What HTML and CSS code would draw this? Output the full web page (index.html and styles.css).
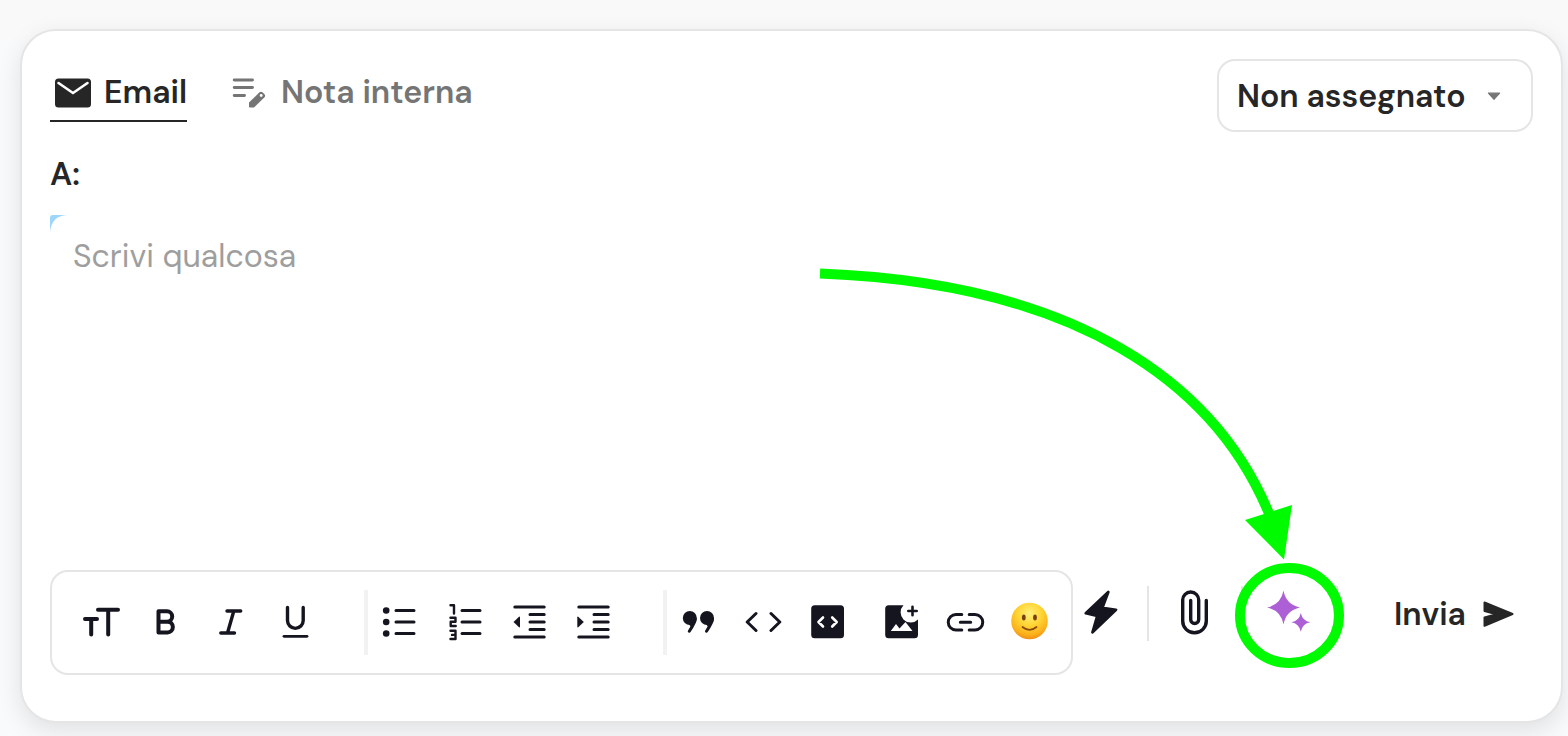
FILE: index.html
```html
<!DOCTYPE html>
<html lang="it">
<head>
<meta charset="utf-8">
<meta name="viewport" content="width=device-width, initial-scale=1">
<title>Email</title>
<link rel="stylesheet" href="styles.css">
</head>
<body class="page">
<main class="composer">
  <header class="composer-head">
    <nav class="tabs">
      <button class="tab tab-active" type="button">
        <svg class="tab-icon" viewBox="0 -1 38 32" aria-hidden="true"><rect x="1" y="1.5" width="36" height="29" rx="3.5" fill="currentColor"/><path d="M4.500 6 19 16 33.500 6" fill="none" stroke="#fff" stroke-width="2.600" stroke-linecap="round"/></svg>
        Email
      </button>
      <button class="tab" type="button">
        <svg class="tab-icon" viewBox="0 -1 38 32" aria-hidden="true"><path d="M3.200 3H21.500M3.200 10.500H21.500M3.200 18.500H13.500" fill="none" stroke="currentColor" stroke-width="2.900" stroke-linecap="round"/><path d="M18 25.500 28.500 15.300q1.500-1.200 3 0l2 2q1.300 1.500 0 3L23 30.500h-4q-1 0-1-1z" fill="currentColor"/><circle cx="30.200" cy="18.500" r="1.400" fill="#fff"/></svg>
        Nota interna
      </button>
    </nav>
    <div class="assignee">
      <select class="assignee-select" aria-label="Assegnatario"><option>Non assegnato</option></select>
      <svg class="assignee-caret" viewBox="0 0 12 8" aria-hidden="true"><path d="M1 1h10L6 6.500z" fill="#757575" stroke="#757575" stroke-linejoin="round"/></svg>
    </div>
  </header>

  <div class="recipient">
    <label class="recipient-label" for="to">A:</label>
    <input class="recipient-input" id="to" type="text">
  </div>

  <div class="editor">
    <svg class="editor-corner" viewBox="0 0 18 18" aria-hidden="true"><path d="M0 17V3Q0 0 3 0H17Q1.500 1 0 17z" fill="#9dd5fb"/></svg>
    <textarea class="editor-text" aria-label="Messaggio" placeholder="Scrivi qualcosa"></textarea>
  </div>

  <footer class="composer-foot">
    <div class="toolbar">
      <div class="group">
        <button class="tool" type="button" aria-label="Dimensione testo"><svg class="icon line" viewBox="0 0 48 48"><path stroke-width="4" d="M21 11.700H41M31.200 12V36.500M8 21H20M14.200 21V36.500"/></svg></button>
        <button class="tool" type="button" aria-label="Grassetto"><svg class="icon line" viewBox="0 0 48 48"><path stroke-width="4" d="M16.500 13.300H25a5 5 0 0 1 0 10.400H16.500zM16.500 23.700H25.500a5.300 5.300 0 0 1 0 10.700H16.500z"/></svg></button>
        <button class="tool" type="button" aria-label="Corsivo"><svg class="icon line" viewBox="0 0 48 48"><path stroke-width="3.400" d="M20 13H33.700M13.800 35H27.500M26.800 13 20.500 35"/></svg></button>
        <button class="tool" type="button" aria-label="Sottolineato"><svg class="icon line" viewBox="0 0 48 48"><path d="M15.500 9.500V22.500a7.800 7.800 0 0 0 15.700 0V9.500" stroke-width="3.400"/><path d="M12 38.300H35" stroke-width="2.800"/></svg></button>
      </div>
      <div class="group group-divided">
        <button class="tool" type="button" aria-label="Elenco puntato"><svg class="icon line" viewBox="0 0 48 48"><path d="M20 12.500H38M20 24H38M20 35.500H38"/><g fill="currentColor" stroke="none"><circle cx="10.200" cy="12.500" r="3.300"/><circle cx="10.200" cy="24" r="3.300"/><circle cx="10.200" cy="35.500" r="3.300"/></g></svg></button>
        <button class="tool" type="button" aria-label="Elenco numerato"><svg class="icon line" viewBox="0 0 48 48"><path d="M21 12.500H39M21 24H39M21 35.500H39"/><path stroke-width="2.400" d="M9.500 7.200H13V15.500M9.500 19.700H14.500V23.800H9.700V28H14.700M9.500 32.800H14.500V41H9.500M11 36.900H14.500"/></svg></button>
        <button class="tool" type="button" aria-label="Riduci rientro"><svg class="icon line" viewBox="0 0 48 48"><path d="M8.800 9H38.200M8.800 39H38.200M24 16.500H38.200M24 24H38.200M24 31.500H38.200"/><path fill="currentColor" stroke="none" d="M7.500 24 13.300 18.500q.7 0 .7.800v9.400q0 .8-.7.800z"/></svg></button>
        <button class="tool" type="button" aria-label="Aumenta rientro"><svg class="icon line" viewBox="0 0 48 48"><path d="M7.800 9H37.200M7.800 39H37.200M23 16.500H37.200M23 24H37.200M23 31.500H37.200"/><path fill="currentColor" stroke="none" d="M12.800 24 7 18.500q-.7 0-.7.800v9.400q0 .8.700.8z"/></svg></button>
      </div>
      <div class="group group-divided">
        <button class="tool" type="button" aria-label="Citazione"><svg class="icon line" viewBox="0 0 48 48"><circle cx="14.800" cy="20" r="7" fill="currentColor" stroke="none"/><circle cx="32" cy="20" r="7" fill="currentColor" stroke="none"/><path stroke-width="3" d="M20.300 21Q20 24.500 14.300 33.200M37.500 21Q37.200 24.500 31.500 33.200"/><path fill="currentColor" stroke="none" d="M14 26.500 21.500 20 17 30zM31.200 26.500 38.700 20 34.200 30z"/></svg></button>
        <button class="tool" type="button" aria-label="Codice"><svg class="icon line" viewBox="0 0 48 48"><path d="M16 15.500 7.200 24 16 32.500M31 15.500 39.800 24 31 32.500"/></svg></button>
        <button class="tool" type="button" aria-label="Blocco di codice"><svg class="icon line" viewBox="0 0 48 48"><rect x="6.200" y="7.300" width="32.800" height="33" rx="3.500" fill="currentColor" stroke="none"/><path stroke="#fff" stroke-width="2.600" d="M18 19.500 13.500 24 18 28.500M27.200 19.500 31.700 24 27.200 28.500"/></svg></button>
      </div>
      <div class="group group-insert">
        <button class="tool" type="button" aria-label="Inserisci immagine"><svg class="icon line" viewBox="0 0 48 48"><path fill="currentColor" stroke="none" d="M11.700 7.300H26.500A9.500 9.500 0 0 0 41 21.500V36.800q0 3.500-3.500 3.500H11.700q-3.500 0-3.500-3.500V10.800q0-3.500 3.500-3.500z"/><path fill="#fff" stroke="none" d="M13.800 33 19 26l3.500 4.500L28.500 24 35.500 33z"/><path stroke-width="2.600" d="M35.500 8.800V17.200M31.300 13H39.700"/></svg></button>
        <button class="tool" type="button" aria-label="Inserisci link"><svg class="icon line" viewBox="0 0 48 48"><path d="M19.800 16.500H14a7.500 7.500 0 0 0 0 15.500H19.800M27.200 16.500H33a7.500 7.500 0 0 1 0 15.500H27.200M18.300 24.200H28.700"/></svg></button>
        <button class="tool" type="button" aria-label="Emoji"><svg class="icon" viewBox="0 0 48 48"><defs><radialGradient id="face" cx=".5" cy=".3" r=".72"><stop offset="0" stop-color="#fff07a"/><stop offset=".45" stop-color="#ffd535"/><stop offset=".8" stop-color="#fbb01a"/><stop offset="1" stop-color="#ee8a18"/></radialGradient></defs><circle cx="22.500" cy="23" r="18.300" fill="url(#face)"/><ellipse cx="16.800" cy="19.500" rx="1.900" ry="2.900" fill="#794010"/><ellipse cx="28" cy="19.500" rx="1.900" ry="2.900" fill="#794010"/><path d="M15.500 29Q22.500 34.800 29.500 29" fill="none" stroke="#8a4a0c" stroke-width="1.700" stroke-linecap="round"/></svg></button>
      </div>
    </div>

    <div class="actions">
      <button class="action action-quick" type="button" aria-label="Risposte rapide"><svg class="icon" viewBox="0 0 48 48"><path d="M31.300 3 8.800 24.200 20.300 26.800 15.500 43.300 39 20.800 25.300 19z" fill="currentColor" stroke="currentColor" stroke-width="2.800" stroke-linejoin="round"/></svg></button>
      <button class="action action-cell" type="button" aria-label="Allega file"><svg class="icon line" viewBox="0 0 48 48"><path stroke-width="3.400" d="M35.300 11.500V32a11.800 11.800 0 0 1-23.600 0V11a8 8 0 0 1 16 0V30.500a4 4 0 0 1-8 0V11.500"/></svg></button>
      <div class="assistant">
        <button class="action action-cell action-ai" type="button" aria-label="Assistente AI"><svg class="icon" viewBox="0 0 48 48"><path fill="currentColor" d="M18.500 1.500Q21 15.500 35 18.500Q21 21.500 18.500 35.500Q16 21.500 2 18.500Q16 15.500 18.500 1.500zM35.800 24Q37.500 32 45.300 33.300Q37.500 34.700 35.800 42.700Q34.100 34.700 26.300 33.300Q34.100 32 35.800 24z"/></svg></button>
        <svg class="callout" viewBox="816 260 530 410" aria-hidden="true"><path d="M820 273.500C1075 283 1216 382 1270 516" fill="none" stroke="#00fb00" stroke-width="10"/><path d="M1245 520 1292 505 1284 559.500z" fill="#00fb00"/><ellipse cx="1289.500" cy="615.500" rx="49.500" ry="47.500" fill="none" stroke="#00fb00" stroke-width="10"/></svg>
      </div>
      <button class="send" type="button">Invia
        <svg class="send-icon" viewBox="0 0 32 28" aria-hidden="true"><path d="M2.500 2.500 30.500 14 2.500 25.800V17.500L14.500 14.300 2.500 11z" fill="currentColor" stroke="currentColor" stroke-width="2" stroke-linejoin="round"/></svg>
      </button>
    </div>
  </footer>
</main>
</body>
</html>
```
FILE: styles.css
```css
* {
  box-sizing: border-box;
}

.page {
  margin: 0;
  min-height: 100vh;
  padding: 29px 5px 13px 20px;
  display: flex;
  background: linear-gradient(#f9f9f9 29px, #f8fafc 60px);
  color: #262626;
  font-family: "DM Sans", Inter, "Open Sans", sans-serif;
  font-optical-sizing: none;
  font-size: 32px;
  line-height: 40px;
}

button,
input,
select,
textarea {
  margin: 0;
  padding: 0;
  border: 0;
  background: none;
  color: inherit;
  font: inherit;
  font-optical-sizing: inherit;
}

.composer {
  flex: 1;
  min-width: 0;
  display: flex;
  flex-direction: column;
  padding: 28px 28px 46px;
  border: 2px solid #e5e5e5;
  border-radius: 36px;
  background: #fff;
  box-shadow: 0 8px 24px rgba(0, 0, 0, 0.1);
}

.composer-head {
  display: flex;
  justify-content: space-between;
  align-items: flex-start;
}

.tabs {
  display: flex;
  gap: 40px;
}

.tab {
  display: flex;
  align-items: center;
  gap: 12px;
  padding: 13px 0 8px 4px;
  border-bottom: 2px solid transparent;
  color: #757575;
  font-weight: 600;
}

.tab-active {
  border-color: #262626;
  color: #262626;
}

.tab-icon {
  width: 38px;
  height: 32px;
}

.assignee {
  position: relative;
}

.assignee-select {
  width: 316px;
  height: 73px;
  padding: 0 48px 0 18px;
  border: 2px solid #e5e5e5;
  border-radius: 18px;
  appearance: none;
  font-weight: 600;
}

.assignee-caret {
  position: absolute;
  top: 33px;
  right: 32px;
  width: 14px;
  height: 9px;
  pointer-events: none;
}

.recipient {
  display: flex;
  gap: 12px;
  padding: 22px 0 21px;
}

.recipient-label {
  font-weight: 600;
}

.recipient-input {
  flex: 1;
  min-width: 0;
  outline: 0;
}

.editor {
  position: relative;
  flex: 1;
  display: flex;
}

.editor-corner {
  position: absolute;
  top: 0;
  left: 0;
  width: 18px;
  height: 18px;
}

.editor-text {
  flex: 1;
  min-height: 120px;
  padding: 21px 23px;
  resize: none;
  outline: 0;
}

.editor-text::placeholder {
  color: #9e9e9e;
  opacity: 1;
}

.composer-foot {
  display: flex;
  align-items: flex-start;
}

.toolbar {
  flex: 1;
  display: flex;
  align-items: center;
  height: 105px;
  padding-left: 17px;
  border: 2px solid #e5e5e5;
  border-radius: 18px;
}

.group {
  display: flex;
}

.group-divided {
  margin-left: 35px;
  border-left: 4px solid #f2f2f2;
}

.group-insert {
  margin-left: 7px;
}

.tool {
  display: flex;
  align-items: center;
  justify-content: center;
  width: 65px;
  height: 65px;
  padding: 0 1px 2px 0;
  color: #14151f;
}

.icon {
  flex: none;
  width: 48px;
  height: 48px;
}

.line {
  fill: none;
  stroke: currentColor;
  stroke-width: 3;
  stroke-linecap: round;
  stroke-linejoin: round;
}

.actions {
  display: flex;
  padding-top: 16px;
}

.action {
  display: flex;
  align-items: center;
  justify-content: center;
  height: 55px;
  padding-bottom: 2px;
  color: #14151f;
}

.action-quick {
  width: 56px;
  margin-right: 18px;
}

.action-cell {
  width: 94px;
  border-left: 2px solid #e5e5e5;
}

.action-ai {
  width: 97px;
  border-right: 2px solid #e5e5e5;
  color: #ad60d5;
}

.assistant {
  position: relative;
}

.callout {
  position: absolute;
  right: -8px;
  bottom: -29px;
  width: 530px;
  height: 410px;
  pointer-events: none;
}

.send {
  display: flex;
  align-items: center;
  gap: 16px;
  height: 55px;
  padding: 0 19px 0 56px;
  font-weight: 600;
}

.send-icon {
  width: 32px;
  height: 28px;
}
```
